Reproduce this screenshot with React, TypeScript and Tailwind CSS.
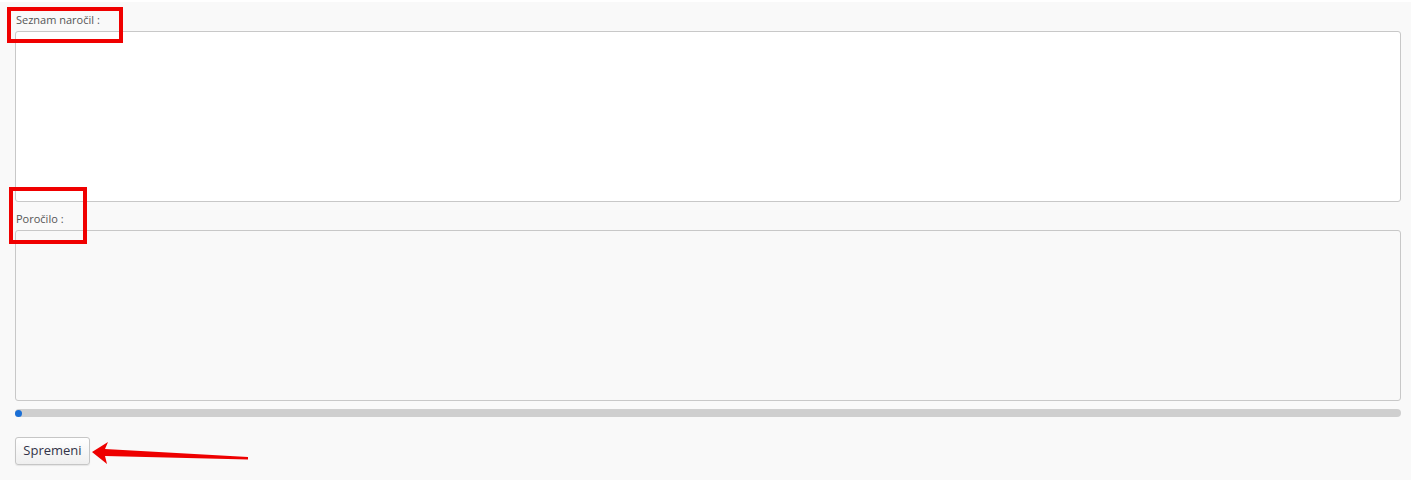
export default function App() {
  return (
    <div className="relative w-[1411px] h-[480px] bg-white" style={{ fontFamily: '"Open Sans", "DejaVu Sans", sans-serif' }}>
      <div className="mt-[2px] h-[478px] bg-[#f9f9f9] pl-[15px] pr-[10px] pt-[10px] flex flex-col">
        {/* Order list */}
        <label className="text-[11px] leading-[16px] text-[#555] pl-[1px]">Seznam naročil :</label>
        <textarea className="mt-[3px] h-[171px] w-full resize-none rounded-[3px] border border-[#c8c8c8] bg-white outline-none" />

        {/* Report */}
        <label className="mt-[9px] text-[11px] leading-[16px] text-[#555] pl-[1px]">Poročilo :</label>
        <textarea
          disabled
          className="mt-[3px] h-[171px] w-full resize-none rounded-[3px] border border-[#c8c8c8] bg-[#f9f9f9] outline-none"
        />

        {/* Progress */}
        <div className="mt-[8px] h-[8px] w-full rounded-full bg-[#cfcfcf] flex items-center">
          <span className="h-[7px] w-[7px] rounded-full bg-[#1a6fd6]" />
        </div>

        <div className="mt-[20px]">
          <button className="h-[28px] w-[75px] rounded-[3px] border border-[#c6c6c6] bg-gradient-to-b from-white to-[#efefef] text-[13px] text-[#333348] shadow-[0_1px_1px_rgba(0,0,0,0.08)]">
            Spremeni
          </button>
        </div>
      </div>

      {/* annotations */}
      <div className="absolute left-[7px] top-[5px] w-[116px] h-[36px] border-[4px] border-[#f00000]" />
      <div className="absolute left-[9px] top-[185px] w-[78px] h-[57px] border-[4px] border-[#f00000]" />
      <svg className="absolute left-0 top-0" width="1411" height="480">
        <path d="M92 450 L108 440 L105 447 L248 455 L248 457.5 L105 454 L107 462 Z" fill="#ee0000" />
      </svg>
    </div>
  )
}
